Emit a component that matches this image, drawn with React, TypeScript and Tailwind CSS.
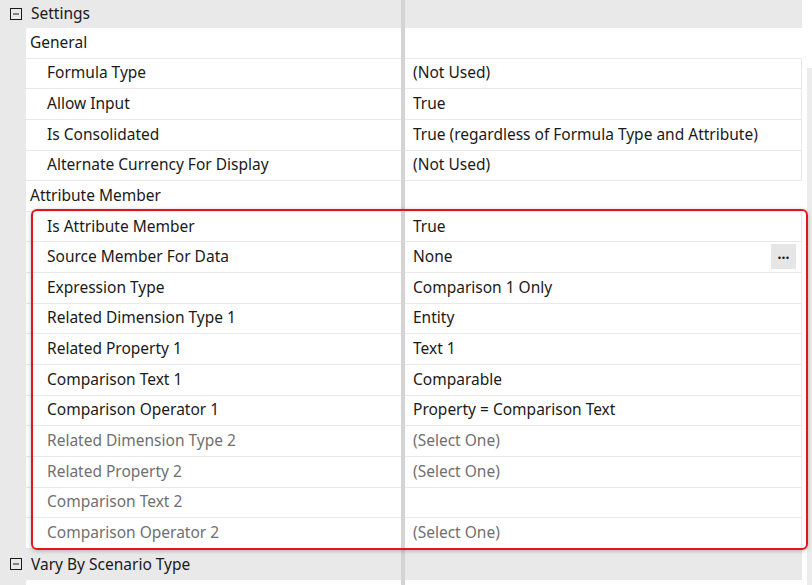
import React from 'react';

type Row =
  | { kind: 'group'; label: string }
  | { kind: 'prop'; label: string; value: string; muted?: boolean; button?: boolean };

const rows: Row[] = [
  { kind: 'group', label: 'General' },
  { kind: 'prop', label: 'Formula Type', value: '(Not Used)' },
  { kind: 'prop', label: 'Allow Input', value: 'True' },
  { kind: 'prop', label: 'Is Consolidated', value: 'True (regardless of Formula Type and Attribute)' },
  { kind: 'prop', label: 'Alternate Currency For Display', value: '(Not Used)' },
  { kind: 'group', label: 'Attribute Member' },
  { kind: 'prop', label: 'Is Attribute Member', value: 'True' },
  { kind: 'prop', label: 'Source Member For Data', value: 'None', button: true },
  { kind: 'prop', label: 'Expression Type', value: 'Comparison 1 Only' },
  { kind: 'prop', label: 'Related Dimension Type 1', value: 'Entity' },
  { kind: 'prop', label: 'Related Property 1', value: 'Text 1' },
  { kind: 'prop', label: 'Comparison Text 1', value: 'Comparable' },
  { kind: 'prop', label: 'Comparison Operator 1', value: 'Property = Comparison Text' },
  { kind: 'prop', label: 'Related Dimension Type 2', value: '(Select One)', muted: true },
  { kind: 'prop', label: 'Related Property 2', value: '(Select One)', muted: true },
  { kind: 'prop', label: 'Comparison Text 2', value: '', muted: true },
  { kind: 'prop', label: 'Comparison Operator 2', value: '(Select One)', muted: true },
];

function CollapseIcon() {
  return (
    <svg width="12" height="12" viewBox="0 0 12 12" className="shrink-0">
      <rect x="0.5" y="0.5" width="11" height="11" fill="none" stroke="#1a1a1a" strokeWidth="1" />
      <line x1="3" y1="6" x2="9" y2="6" stroke="#1a1a1a" strokeWidth="1" />
    </svg>
  );
}

function Category({ label, tall }: { label: string; tall?: boolean }) {
  return (
    <div className={`flex ${tall ? 'h-[31px]' : 'h-[28px]'} bg-[#e9e9e9]`}>
      <div className="flex w-[401px] items-center gap-[9px] pl-[10px]">
        <CollapseIcon />
        <span>{label}</span>
      </div>
      <div className="w-[4px] bg-[#d4d4d4]" />
      <div className="w-[397px]" />
    </div>
  );
}

function PropRow({ row }: { row: Row }) {
  if (row.kind === 'group') {
    return (
      <div className="flex h-[30.65px] bg-[#e9e9e9]">
        <div className="ml-[26px] flex w-[375px] items-center border-b border-[#e8e8e8] bg-white pb-[1px] pl-[4px]">
          {row.label}
        </div>
        <div className="w-[4px] bg-[#d4d4d4]" />
        <div className="w-[397px] border-b border-[#e8e8e8] bg-white" />
      </div>
    );
  }
  const tone = row.muted ? 'text-[#707070]' : 'text-[#1a1a1a]';
  return (
    <div className="flex h-[30.65px] bg-[#e9e9e9]">
      <div className={`ml-[26px] flex w-[375px] items-center border-b border-[#e8e8e8] bg-white pb-[1px] pl-[21px] ${tone}`}>
        {row.label}
      </div>
      <div className="w-[4px] bg-[#d4d4d4]" />
      <div
        className={`flex w-[397px] items-center justify-between border-b border-r border-[#e8e8e8] bg-white pb-[1px] pl-[8px] pr-[5px] ${tone}`}
      >
        <span>{row.value}</span>
        {row.button && (
          <span className="flex h-[25px] w-[25px] items-center justify-center bg-[#e6e6e6] pb-[6px] text-[14px] font-bold leading-none text-[#1a1a1a]">
            ...
          </span>
        )}
      </div>
    </div>
  );
}

export default function App() {
  return (
    <div
      className="relative h-[585px] w-[812px] overflow-hidden bg-white text-[15.5px] text-[#1a1a1a]"
      style={{ fontFamily: '"Noto Sans", "Open Sans", sans-serif' }}
    >
      <div className="flex">
        <div className="w-[802px]">
          <Category label="Settings" />
          {rows.map((r, i) => (
            <PropRow key={i} row={r} />
          ))}
          <Category label="Vary By Scenario Type" tall />
          <div className="flex h-[10px] bg-[#e9e9e9]">
            <div className="ml-[26px] w-[375px] bg-white" />
            <div className="w-[4px] bg-[#d4d4d4]" />
            <div className="w-[397px] bg-white" />
          </div>
        </div>
        <div className="flex w-[10px] flex-col">
          <div className="h-[68px]" />
          <div className="ml-[5px] flex-1 bg-[#ececec]" />
        </div>
      </div>

      {/* highlight */}
      <div className="pointer-events-none absolute left-[31px] top-[209px] h-[341px] w-[777px] rounded-[6px] border-2 border-[#e5141b] shadow-[0_1px_4px_rgba(0,0,0,0.25)]" />
    </div>
  );
}
